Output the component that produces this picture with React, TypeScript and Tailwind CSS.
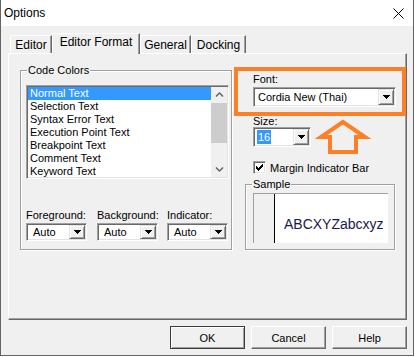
import React from "react";

const ui = "font-['Liberation_Sans',Arial,sans-serif]";

const sunken =
  "border border-t-[#a0a0a0] border-l-[#a0a0a0] border-r-white border-b-white shadow-[inset_1px_1px_0_#696969,inset_-1px_-1px_0_#e3e3e3]";
const raised =
  "border border-t-[#e3e3e3] border-l-[#e3e3e3] border-r-[#696969] border-b-[#696969] shadow-[inset_1px_1px_0_#fff,inset_-1px_-1px_0_#a0a0a0]";

function Triangle() {
  return (
    <svg width="7" height="4" viewBox="0 0 7 4" shapeRendering="crispEdges">
      <path d="M0 0h7v1H0zM1 1h5v1H1zM2 2h3v1H2zM3 3h1v1H3z" fill="#000" />
    </svg>
  );
}

function Combo({
  className,
  text,
  textPad,
  selected,
}: {
  className: string;
  text: string;
  textPad: string;
  selected?: boolean;
}) {
  return (
    <div className={`flex bg-white p-px ${sunken} ${className}`}>
      <div className={`flex flex-1 items-center text-[11px] leading-[12px] ${textPad}`}>
        {selected ? (
          <span className="bg-[#3399ff] px-px py-px text-white">{text}</span>
        ) : (
          text
        )}
      </div>
      <div className={`flex w-[16px] items-center justify-center bg-[#f0f0f0] ${raised}`}>
        <Triangle />
      </div>
    </div>
  );
}

function Group({
  label,
  className,
  children,
}: {
  label: string;
  className: string;
  children: React.ReactNode;
}) {
  return (
    <div
      className={`relative border border-[#a0a0a0] shadow-[1px_1px_0_#fff,inset_1px_1px_0_#fff] ${className}`}
    >
      <span className="absolute left-[6px] top-[-7px] bg-[#f0f0f0] px-px text-[11px] leading-[12px]">
        {label}
      </span>
      {children}
    </div>
  );
}

function Chevron({ down }: { down?: boolean }) {
  return (
    <svg width="9" height="6" viewBox="0 0 9 6">
      <path
        d={down ? "M1 1.5l3.5 3.5L8 1.5" : "M1 4.5L4.5 1 8 4.5"}
        fill="none"
        stroke="#606060"
        strokeWidth="1.4"
      />
    </svg>
  );
}

function Tab({ label, active, className }: { label: string; active?: boolean; className: string }) {
  if (active) {
    return (
      <div
        className={`relative z-10 -mb-px flex h-[21px] justify-center rounded-tl-[2px] border-t border-l border-r border-white border-r-[#696969] bg-[#f0f0f0] pt-[1px] text-[12px] leading-[14px] shadow-[inset_-1px_0_0_#a0a0a0] ${className}`}
      >
        {label}
      </div>
    );
  }
  return (
    <div
      className={`flex h-[18px] justify-center rounded-tl-[2px] border-t border-l border-r border-white border-r-[#696969] bg-[#f0f0f0] pt-[2px] text-[12px] leading-[14px] shadow-[inset_-1px_0_0_#a0a0a0] ${className}`}
    >
      {label}
    </div>
  );
}

function Button({ label, isDefault }: { label: string; isDefault?: boolean }) {
  return (
    <div
      className={`flex h-[23px] w-[75px] items-center justify-center bg-[#f0f0f0] text-[11px] leading-[12px] ${
        isDefault
          ? "border border-[#3c3c3c] shadow-[inset_1px_1px_0_#fff,inset_-1px_-1px_0_#a0a0a0]"
          : "border border-t-white border-l-white border-r-[#696969] border-b-[#696969] shadow-[inset_-1px_-1px_0_#a0a0a0]"
      }`}
    >
      {label}
    </div>
  );
}

const items = [
  "Normal Text",
  "Selection Text",
  "Syntax Error Text",
  "Execution Point Text",
  "Breakpoint Text",
  "Comment Text",
  "Keyword Text",
];

export default function App() {
  return (
    <div className={`relative h-[357px] w-[415px] bg-white text-black ${ui}`}>
      <div className="flex h-[356px] w-[414px] flex-col border-x border-b border-[#646464] bg-[#f0f0f0]">
        {/* Title bar */}
        <div className="flex h-[26px] items-center justify-between bg-white pl-[3px] pr-[9px]">
          <span className="text-[12px] leading-[14px]">Options</span>
          <svg width="11" height="11" viewBox="0 0 11 11">
            <path d="M0.5 0.5l10 10M10.5 0.5l-10 10" stroke="#000" strokeWidth="1" />
          </svg>
        </div>

        <div className="pt-[7px]">
          {/* Tabs */}
          <div className="flex h-[20px] items-end pl-[9px]">
            <Tab label="Editor" className="w-[42px]" />
            <Tab label="Editor Format" active className="w-[88px]" />
            <Tab label="General" className="w-[51px]" />
            <Tab label="Docking" className="w-[55px]" />
          </div>

          {/* Panel */}
          <div className="ml-[7px] flex h-[267px] w-[399px] gap-[13px] border border-white border-r-[#696969] border-b-[#696969] pl-[11px] pt-[16px] shadow-[inset_-1px_-1px_0_#a0a0a0]">
            {/* Code Colors */}
            <Group label="Code Colors" className="h-[180px] w-[212px] pl-[5px] pt-[14px]">
              <div className={`flex h-[94px] w-[203px] bg-white p-px ${sunken}`}>
                <div className="flex flex-1 flex-col">
                  {items.map((it, i) => (
                    <div
                      key={it}
                      className={`h-[13px] pl-[2px] text-[11px] leading-[13px] whitespace-nowrap ${
                        i === 0 ? "bg-[#3399ff] text-white" : ""
                      }`}
                    >
                      {it}
                    </div>
                  ))}
                </div>
                <div className="flex w-[16px] flex-col bg-[#f0f0f0]">
                  <div className="flex h-[16px] items-center justify-center">
                    <Chevron />
                  </div>
                  <div className="h-[40px] bg-[#cdcdcd]" />
                  <div className="flex-1" />
                  <div className="flex h-[16px] items-center justify-center">
                    <Chevron down />
                  </div>
                </div>
              </div>

              <div className="mt-[30px] grid grid-cols-[71px_70px_61px]">
                {["Foreground:", "Background:", "Indicator:"].map((l) => (
                  <div key={l} className="flex flex-col">
                    <span className="text-[11px] leading-[12px] whitespace-nowrap">{l}</span>
                    <Combo className="mt-[2px] h-[18px] w-[61px]" text="Auto" textPad="pl-[5px]" />
                  </div>
                ))}
              </div>
            </Group>

            {/* Right column */}
            <div className="flex w-[150px] flex-col">
              <span className="ml-[8px] mt-[3px] text-[11px] leading-[12px]">Font:</span>
              <Combo
                className="ml-[8px] mt-[2px] h-[20px] w-[143px]"
                text="Cordia New (Thai)"
                textPad="pl-[3px]"
              />
              <span className="ml-[8px] mt-[8px] text-[11px] leading-[12px]">Size:</span>
              <Combo
                className="ml-[8px] h-[20px] w-[58px]"
                text="16"
                textPad="pl-[2px]"
                selected
              />
              <div className="ml-[8px] mt-[14px] flex h-[13px] items-center gap-[4px]">
                <div className={`flex h-[13px] w-[13px] items-center justify-center bg-white ${sunken}`}>
                  <svg width="7" height="7" viewBox="0 0 7 7" shapeRendering="crispEdges">
                    <path
                      d="M6 0h1v3H6zM5 1h1v3H5zM4 2h1v3H4zM3 3h1v3H3zM2 4h1v3H2zM1 3h1v3H1zM0 2h1v3H0z"
                      fill="#000"
                    />
                  </svg>
                </div>
                <span className="text-[11px] leading-[12px] whitespace-nowrap">Margin Indicator Bar</span>
              </div>

              <Group label="Sample" className="mt-[10px] h-[66px] w-[150px] pl-[7px] pt-[8px]">
                <div className="flex h-[50px] w-[135px] border-t border-l border-[#a0a0a0] bg-white">
                  <div className="w-[20px] bg-[#f0f0f0]" />
                  <div className="w-px bg-black" />
                  <div className="pl-[9px] pt-[22px] text-[14px] leading-[16px] text-[#1a1a4a]">
                    ABCXYZabcxyz
                  </div>
                </div>
              </Group>
            </div>
          </div>

          {/* Buttons */}
          <div className="mt-[6px] flex justify-end gap-[6px] pr-[6px]">
            <Button label="OK" isDefault />
            <Button label="Cancel" />
            <Button label="Help" />
          </div>
        </div>
      </div>

      {/* Orange annotation overlay */}
      <svg
        className="pointer-events-none absolute left-0 top-0"
        width="415"
        height="357"
        viewBox="0 0 415 357"
      >
        <rect x="236" y="69" width="168" height="45" fill="none" stroke="#ff7f27" strokeWidth="4" />
        <path
          d="M343 122L321 137H330V152H356V137H365Z"
          fill="none"
          stroke="#ff7f27"
          strokeWidth="4"
          strokeLinejoin="miter"
        />
      </svg>
    </div>
  );
}
